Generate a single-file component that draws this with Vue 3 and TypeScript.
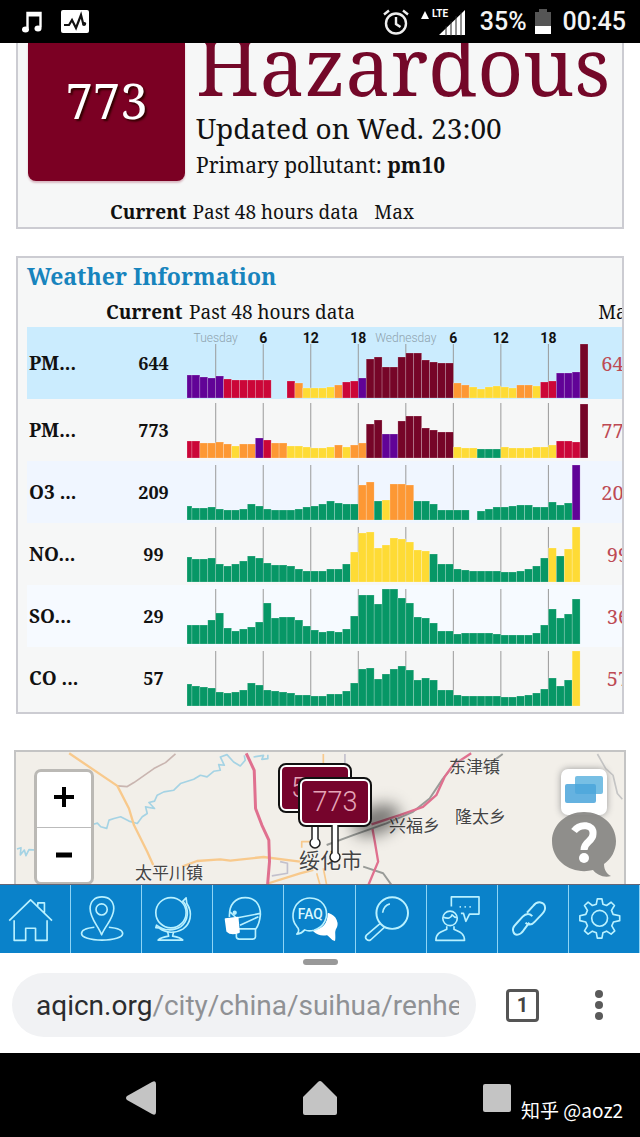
<script setup lang="ts">
type Bar = { x: number; y: number; w: number; h: number; fill: string }
type Series = { name: string; current: number; max: number; data: string }

const BASE = 59
const colors: Record<string, string> = {
  G: '#079766',
  Y: '#fedb35',
  O: '#fd9834',
  R: '#cb0638',
  P: '#610397',
  M: '#760528',
}

const series: Series[] = [
  {
    name: 'PM...', current: 644, max: 644,
    data: 'P23 P23 P21 P20 P22 R19 R18 R18 R18 R18 R18 - - R17 O15 Y10 Y10 Y10 Y11 O13 R16 R17 P20 M39 M41 M31 M31 M41 M45 M45 M38 M36 M35 M35 O15 O13 Y11 Y9 Y11 Y12 Y11 Y10 O13 O13 Y12 R16 R17 P25 P25 P26 M54',
  },
  {
    name: 'PM...', current: 773, max: 773,
    data: 'R17 R17 O15 O15 O16 O14 Y12 O14 O14 P20 R18 O15 O15 Y12 Y12 Y11 Y10 Y10 Y11 O13 Y11 O13 O15 M34 M38 P24 P24 M37 M42 M42 M30 M28 M26 M26 Y11 Y10 Y10 G9 G9 G9 Y11 Y10 Y10 Y10 Y11 Y11 Y13 R17 R17 R16 M54',
  },
  {
    name: 'O3 ...', current: 209, max: 209,
    data: 'G14 G12 G12 G13 G11 G10 G10 G11 G16 G14 G11 G10 G10 G10 G11 G13 G14 G16 G19 G17 G16 G16 O35 O38 G19 Y20 O36 O36 O35 G19 G19 G16 G10 G10 G10 G10 - G9 G11 G13 G13 G14 G15 G15 G13 G13 G18 G15 G17 P55',
  },
  {
    name: 'NO...', current: 99, max: 99,
    data: 'G25 G23 G23 G24 G18 G16 G18 G21 G26 G24 G19 G17 G17 G16 G13 G11 G11 G11 G13 G13 G18 Y30 Y49 Y50 Y34 Y37 Y44 Y43 Y40 Y32 Y31 G28 G18 G18 G13 G12 G11 G11 G11 G11 G10 G10 G11 G13 G16 G24 Y34 G26 Y33 Y55',
  },
  {
    name: 'SO...', current: 29, max: 36,
    data: 'G19 G19 G19 G24 G31 G16 G13 G15 G17 G22 G41 G26 G27 G27 G24 G18 G14 G12 G13 G12 G15 G28 G49 G49 G40 G55 G55 G46 G41 G27 G26 G21 G13 G13 G10 G11 G11 G11 G11 G10 G9 G9 G9 G9 G11 G19 G35 G26 G30 G45',
  },
  {
    name: 'CO ...', current: 57, max: 57,
    data: 'G22 G20 G19 G18 G14 G13 G14 G16 G23 G21 G16 G15 G14 G13 G11 G11 G10 G10 G12 G12 G15 G23 G37 G38 G27 G32 G37 G40 G36 G26 G28 G26 G16 G16 G11 G10 G10 G10 G10 G10 G9 G9 G10 G11 G13 G17 G28 G20 G26 Y55',
  },
]

function bars(data: string, base: number): Bar[] {
  const out: Bar[] = []
  data.split(' ').forEach((item, i) => {
    if (item === '-') return
    const h = Number(item.slice(1))
    const start = i === 0 ? 0 : 5 + (i - 1) * 8
    out.push({ x: start, y: base - h, w: i === 0 ? 5 : 8, h, fill: colors[item[0]] })
  })
  return out
}

const rows = series.map((s, i) => {
  const height = i === 0 ? 72 : 62
  const base = i === 0 ? 71 : BASE
  return { ...s, height, base, top: i === 0 ? 17 : 4, bars: bars(s.data, base) }
})

const ticks = [29, 77, 125, 173, 221, 269, 317, 365]
const tickLabels = ['Tuesday', '6', '12', '18', 'Wednesday', '6', '12', '18']

const places = [
  { name: '东津镇', cls: 'dongjin' },
  { name: '兴福乡', cls: 'xingfu' },
  { name: '隆太乡', cls: 'longtai' },
  { name: '太平川镇', cls: 'taiping' },
  { name: '绥化市', cls: 'suihua' },
]

const navItems = [
  { label: 'Home', box: '0 12 213 204' },
  { label: 'Here', box: '213 12 213 204' },
  { label: 'Map', box: '427 12 213 204' },
  { label: 'Mask', box: '640 12 213 204' },
  { label: 'FAQ', box: '853 12 213 204' },
  { label: 'Search', box: '107 12 213 204' },
  { label: 'Contact', box: '320 12 213 204' },
  { label: 'Links', box: '533 12 213 204' },
  { label: 'Settings', box: '747 12 213 204' },
]
</script>

<template>
  <div class="phone">
    <header class="status">
      <svg class="music" viewBox="0 0 20 22" width="20" height="22">
        <path d="M5.500 17V2H18.500V16.500" fill="none" stroke="#fff" stroke-width="2.400" />
        <path d="M5 3.500H19" stroke="#fff" stroke-width="4" />
        <ellipse cx="3.500" cy="18.500" rx="3.500" ry="3" fill="#fff" />
        <ellipse cx="16" cy="17.500" rx="3.500" ry="3" fill="#fff" />
      </svg>
      <svg class="pulse" viewBox="0 0 28 23" width="28" height="23">
        <rect width="28" height="23" rx="2" fill="#fff" />
        <path d="M3 15H8L11 10L15 18L20 5L22 13L25 14" fill="none" stroke="#111" stroke-width="2.200" />
        <circle cx="23" cy="14" r="2" fill="#111" />
      </svg>
      <span class="spacer"></span>
      <svg class="alarm" viewBox="0 0 26 26" width="26" height="26" fill="none" stroke="#eee" stroke-width="2.400">
        <circle cx="13" cy="14.500" r="10" />
        <path d="M13 8V15L17.500 18M1 5.500L6 1.500M25 5.500L20 1.500" />
      </svg>
      <svg class="signal" viewBox="0 0 46 28" width="46" height="28">
        <path d="M1 11L5 3L9 11Z" fill="#fff" />
        <path d="M19 27L45 2V27Z" fill="#fff" />
        <path d="M26 18V28M31 13V28M36 8V28M41 4V28" stroke="#222" stroke-width="1" />
        <text x="12" y="9" class="lte">LTE</text>
      </svg>
      <span class="percent">35%</span>
      <svg class="battery" viewBox="0 0 16 25" width="16" height="25">
        <path d="M4 0H12V3H16V25H0V3H4Z" fill="#555" />
        <path d="M0 17H16V25H0Z" fill="#fff" />
      </svg>
      <span class="clock">00:45</span>
    </header>

    <main class="page">
      <section class="card summary">
        <div class="overview">
          <div class="badge">773</div>
          <div class="state">
            <h1>Hazardous</h1>
            <p class="updated">Updated on Wed. 23:00</p>
            <p class="pollutant">Primary pollutant: <b>pm10</b></p>
          </div>
        </div>
        <table class="legend">
          <thead>
            <tr>
              <th class="strong">Current</th>
              <th>Past 48 hours data</th>
              <th>Max</th>
            </tr>
          </thead>
        </table>
      </section>

      <section class="card weather">
        <h2>Weather Information</h2>
        <table class="data">
          <colgroup>
            <col class="c-name" />
            <col class="c-current" />
            <col class="c-chart" />
            <col class="c-max" />
          </colgroup>
          <thead>
            <tr>
              <th></th>
              <th class="strong">Current</th>
              <th class="past">Past 48 hours data</th>
              <th class="centered">Max</th>
            </tr>
          </thead>
          <tbody>
            <tr v-for="(row, i) in rows" :key="i" :class="'r' + i">
              <th scope="row" class="name">{{ row.name }}</th>
              <td class="current">{{ row.current }}</td>
              <td class="chart">
                <div class="plot">
                  <svg :viewBox="`0 0 405 ${row.height}`" preserveAspectRatio="none">
                    <line v-for="t in ticks" :key="t" :x1="t" :x2="t" :y1="row.top" :y2="row.base" stroke="#999" />
                    <rect
                      v-for="b in row.bars" :key="b.x" :x="b.x" :y="b.y" :width="b.w" :height="b.h"
                      :fill="b.fill" stroke="#fff" stroke-opacity="0.35" stroke-width="0.600"
                    />
                  </svg>
                  <template v-if="i === 0">
                    <span
                      v-for="(label, n) in tickLabels" :key="n" class="tick" :class="{ day: label.length > 2 }"
                      :style="{ left: (ticks[n] / 405) * 100 + '%' }"
                    >{{ label }}</span>
                  </template>
                </div>
              </td>
              <td class="max">{{ row.max }}</td>
            </tr>
          </tbody>
        </table>
      </section>

      <section class="map">
        <svg class="roads" viewBox="45 30 1830 402" preserveAspectRatio="xMidYMin slice" fill="none" stroke-linejoin="round">
          <g stroke="#a5d3e4" stroke-width="5">
            <path d="M48 322L60 318L58 340L70 325L75 342L84 324L105 325M275 248L290 244L300 255L318 260L325 235L340 230L360 225L385 238L410 245L425 225L440 215L435 195L462 200L445 182L462 178L470 160L490 150L520 145L540 125L580 112L600 100L620 105L640 88L660 85L655 68L672 70L660 45L680 38L700 60L720 72L735 55L732 40M760 45L790 40L785 52L803 50V38" />
          </g>
          <g stroke="#c9b5b0" stroke-width="5">
            <path d="M350 132L380 134L400 122L460 80L495 62L525 36" />
            <path d="M1035 36V80M815 403L862 395V365L840 360" stroke="#c3c0cc" />
            <path d="M1795 36L1820 80L1842 100L1855 155L1870 172" stroke="#c5c5c5" />
            <path d="M980 310L1060 280L1160 245L1240 210L1290 170L1330 110L1355 80M1450 80L1510 36M1090 375L1150 395L1175 430" stroke="#999b98" stroke-width="6" />
          </g>
          <g stroke="#f8c98c" stroke-width="7">
            <path d="M205 34L350 132L385 200L400 250L440 330L458 370M545 375L590 358L660 353L690 357L790 346L900 360M805 425L900 395L940 385" />
            <path d="M970 36V90M905 318V300H940M950 395L960 430M970 380L980 430" stroke-width="5" />
          </g>
          <g stroke="#e0708f" stroke-width="9">
            <path d="M738 34L762 85L766 200L785 250L806 295L808 360L802 432" />
            <path d="M1115 248L1200 220L1270 195L1310 160L1335 105L1360 70L1415 34M1118 262L1125 300L1135 360L1105 432" stroke-width="7" />
          </g>
        </svg>

        <span v-for="p in places" :key="p.name" class="place" :class="p.cls">{{ p.name }}</span>
        <span class="pin-shadow"></span>

        <button class="pin back" aria-label="Station 5"><span class="plate">5</span><svg width="14" height="40" viewBox="0 0 14 40"><path d="M4 0V28A5 5 0 1 0 10 28V0" fill="#fff" stroke="#222" stroke-width="1.500" /></svg></button>
        <button class="pin front" aria-label="Station 773"><span class="plate">773</span><svg width="14" height="40" viewBox="0 0 14 40"><path d="M4 0V28A5 5 0 1 0 10 28V0" fill="#fff" stroke="#222" stroke-width="1.500" /></svg></button>

        <div class="zoom">
          <button aria-label="Zoom in"><svg width="20" height="20" viewBox="0 0 20 20"><path d="M10 0V20M0 10H20" stroke="#000" stroke-width="4" /></svg></button>
          <button aria-label="Zoom out"><svg width="20" height="20" viewBox="0 0 20 20"><path d="M2 12H18" stroke="#000" stroke-width="5" /></svg></button>
        </div>

        <button class="layers" aria-label="Layers">
          <svg width="40" height="30" viewBox="0 0 40 30">
            <rect x="11" y="1" width="28" height="18" rx="2" fill="#77bfe4" />
            <rect x="1" y="9" width="31" height="19" rx="2" fill="#4aa5da" fill-opacity="0.850" />
          </svg>
        </button>
        <button class="help" aria-label="Help">
          <svg width="66" height="68" viewBox="0 0 66 68">
            <path d="M33 1C51 1 65 14 65 30C65 40 60 48 53 53C53 59 56 63 60 65C53 67 46 64 42 59C23 64 1 52 1 30C1 14 15 1 33 1Z" fill="#888683" fill-opacity="0.930" />
            <path d="M23 20C29 12 43 13 42 23C42 31 33 30 33 39" fill="none" stroke="#fff" stroke-width="7" />
            <circle cx="33" cy="47" r="5" fill="#fff" />
          </svg>
        </button>
      </section>
    </main>

    <nav class="sitebar">
      <a v-for="(item, i) in navItems" :key="item.label" href="#" :aria-label="item.label">
        <svg :viewBox="item.box" fill="none" stroke="#b9f1ff" stroke-width="5" stroke-linejoin="round">
          <template v-if="i === 0">
            <path d="M28 119L93 56L158 119M43 118V179H78V142H108V179H143V118M115 74V65H135V94" />
          </template>
          <template v-else-if="i === 1">
            <path d="M306 162C296 135 271 113 271 82C271 60 286 47 307 47C328 47 343 60 343 82C343 113 316 135 306 162Z" />
            <circle cx="306" cy="85" r="17" />
            <path d="M284 139C262 141 245 148 245 158C245 170 272 178 307 178C342 178 370 170 370 158C370 148 352 141 328 139" />
          </template>
          <template v-else-if="i === 2">
            <circle cx="515" cy="95" r="46" />
            <path d="M552 60C572 84 568 120 545 137C522 152 492 149 473 134M549 62L561 50L563 66C584 98 572 130 552 144C530 158 500 158 478 141L469 140L472 131" />
            <path d="M505 153L508 166C496 168 482 172 476 178H551C546 172 532 168 520 166L523 153" />
          </template>
          <template v-else-if="i === 3">
            <path d="M690 108C688 70 708 49 738 49C768 49 784 70 784 100C782 125 776 137 769 146V168Q768 175 760 175H720Q711 175 711 168V158M690 91L711 111L784 97M778 107L722 133M719 144H769" />
            <circle cx="706" cy="95" r="4" fill="#b9f1ff" />
            <path d="M678 114L715 110L719 154C703 160 690 158 683 151Z" fill="#fff" stroke="#fff" />
          </template>
          <template v-else-if="i === 4">
            <path d="M988 98C1010 105 1020 128 1008 145C1004 153 1008 168 1006 178C998 176 992 163 984 160C968 164 954 159 944 150C969 146 988 130 988 98Z" fill="#fff" stroke="#fff" />
            <path d="M892 160C900 152 898 143 892 137C873 115 878 79 900 61C927 41 966 50 979 80C989 108 975 139 944 148C932 151 922 150 916 147C910 154 901 159 892 160Z" />
            <text x="895" y="114" class="faq">FAQ</text>
          </template>
          <template v-else-if="i === 5">
            <circle cx="217" cy="96" r="48" stroke-width="6" />
            <path d="M188 95C190 80 198 71 210 68M180 128L138 164C132 173 143 183 152 177L194 139" />
          </template>
          <template v-else-if="i === 6">
            <path d="M394 76V47H478V99H449L438 121L431 97H423" />
            <circle cx="390" cy="112" r="22" />
            <path d="M369 108C383 115 394 111 396 101C402 108 407 110 411 109M380 136V145C370 151 347 153 347 179H434C434 153 411 151 402 145V136" />
            <path d="M419 77H455" stroke-dasharray="4 11" />
          </template>
          <template v-else-if="i === 7">
            <path d="M621 95L640 74C653 57 675 62 676 79C677 87 673 93 666 100L645 122C635 134 622 133 617 125M628 125L611 148C600 164 585 166 580 154C576 146 579 138 587 130L608 107C618 96 631 96 637 106" stroke-width="6" />
          </template>
          <template v-else>
            <circle cx="840" cy="112" r="24" />
            <path d="M833 53H847L850 69L861 73L875 63L885 73L876 88L881 100L901 104V119L882 123L877 135L886 150L875 160L861 151L850 156L847 172H833L830 156L818 151L805 160L794 150L803 135L798 123L780 119V104L798 100L803 88L794 73L805 63L818 73L830 69Z" />
          </template>
        </svg>
      </a>
    </nav>

    <footer class="browser">
      <span class="handle"></span>
      <div class="address-row">
        <button class="address"><span class="url"><span class="host">aqicn.org</span>/city/china/suihua/renhe</span></button>
        <button class="tabs" aria-label="Open tabs">1</button>
        <button class="more" aria-label="More"><i></i><i></i><i></i></button>
      </div>
    </footer>

    <div class="system">
      <button aria-label="Back"><svg width="34" height="36" viewBox="0 0 34 36"><path d="M3 16Q1 18 3 20L28 34Q32 36 32 32V4Q32 0 28 2Z" fill="#c4c4c4" /></svg></button>
      <button aria-label="Home"><svg width="36" height="38" viewBox="0 0 36 38"><path d="M16 3Q18 1 20 3L35 18V34Q35 36 33 36H3Q1 36 1 34V18Z" fill="#c4c4c4" /></svg></button>
      <button aria-label="Recent"><svg width="30" height="30" viewBox="0 0 30 30"><rect x="1" y="1" width="28" height="28" rx="2" fill="#c4c4c4" /></svg></button>
      <span class="credit">知乎 @aoz2</span>
    </div>
  </div>
</template>

<style>
body {
  background: #fff;
}
</style>

<style scoped>
.phone {
  display: flex;
  flex-direction: column;
  min-height: 100vh;
  overflow: hidden;
  background: #fff;
  color: #111;
  font-family: "Noto Serif", "DejaVu Serif Condensed", "Liberation Serif", serif;
}
button {
  padding: 0;
  border: 0;
  background: none;
  font: inherit;
  color: inherit;
}
h1, h2, p {
  margin: 0;
  font-weight: 400;
}
.status {
  position: relative;
  z-index: 2;
  display: flex;
  align-items: center;
  height: 43px;
  padding: 0 14px 0 22px;
  background: #000;
  color: #f4f4f4;
  font-family: Roboto, sans-serif;
  font-size: 25px;
  font-weight: 500;
}
.pulse { margin-left: 19px; }
.spacer { flex: 1; }
.signal { margin-left: 11px; }
.lte {
  fill: #fff;
  font-size: 10px;
  font-weight: 700;
}
.percent { margin-left: 14px; }
.battery { margin: 0 12px 0 8px; }

.page {
  display: flex;
  flex-direction: column;
}
.card {
  box-sizing: border-box;
  margin: 0 16px;
  border: 2px solid #ccccd2;
  background: #f6f7f7;
  overflow: hidden;
}
.summary {
  height: 186px;
  border-top: 0;
}
.overview {
  display: flex;
  gap: 11px;
  height: 139px;
  padding-left: 10px;
}
.badge {
  flex: none;
  width: 157px;
  height: 138px;
  border-radius: 0 0 8px 8px;
  background: #7b0023;
  box-shadow: 0 2px 2px #d9b9c2;
  color: #fff;
  font-size: 49px;
  line-height: 114px;
  text-align: center;
  text-shadow: 2px 2px 2px #300;
}
.state { white-space: nowrap; }
.state h1 {
  height: 66px;
  color: #740829;
  font-size: 80px;
  line-height: 44px;
}
.updated {
  font-size: 28px;
  line-height: 38px;
}
.pollutant {
  font-size: 21px;
  line-height: 36px;
}
table {
  border-collapse: collapse;
  font-size: 19px;
}
th {
  padding: 0;
  font-weight: 400;
  text-align: left;
  white-space: nowrap;
}
td { padding: 0; }
.strong { font-weight: 700; }
.legend {
  margin: 18px 0 0 92px;
  line-height: 24px;
}
.legend th { padding-right: 6px; }
.legend th + th { padding-right: 16px; }

.weather {
  height: 458px;
  margin-top: 27px;
  padding-left: 9px;
}
.weather h2 {
  color: #1784bd;
  font-size: 23px;
  font-weight: 700;
  line-height: 36px;
}
.data {
  table-layout: fixed;
  width: 616px;
}
.c-name { width: 79px; }
.c-current { width: 81px; }
.c-chart { width: 406px; }
.c-max { width: 50px; }
.data thead th {
  height: 29px;
  padding-top: 4px;
  line-height: 29px;
}
.data .past { padding-left: 2px; }
.data .centered { text-align: center; }
.data .name {
  padding-left: 2px;
  font-size: 19px;
  font-weight: 700;
}
.data .current {
  padding-left: 14px;
  font-size: 18px;
  font-weight: 700;
  text-align: center;
}
.max {
  color: #bd4a54;
  font-size: 20px;
  text-align: center;
}
.plot {
  position: relative;
  width: 401px;
  height: 62px;
}
.plot svg {
  display: block;
  width: 100%;
  height: 100%;
}
.r0 { background: #cbecfe; }
.r0 .plot { height: 72px; }
.r2 { background: #f0f6ff; }
.r4 { background: #f6faff; }
.tick {
  position: absolute;
  top: 2px;
  transform: translateX(-50%);
  font-family: Roboto, sans-serif;
  font-size: 14px;
  font-weight: 700;
  line-height: 18px;
}
.tick.day {
  color: #8fa3ae;
  font-size: 12px;
  font-weight: 300;
}

.map {
  position: relative;
  box-sizing: border-box;
  height: 134px;
  margin: 36px 14px 0;
  border: 2px solid #c4c4c4;
  border-bottom: 0;
  background: #f2efe9;
  overflow: hidden;
}
.roads {
  display: block;
  width: 100%;
  height: 100%;
}
.place {
  position: absolute;
  color: #444;
  font-family: "Noto Sans CJK SC", sans-serif;
  font-size: 17px;
  line-height: 20px;
  text-shadow: 0 0 2px #fff;
}
.dongjin { left: 433px; top: 4px; }
.xingfu { left: 373px; top: 63px; }
.longtai { left: 439px; top: 54px; }
.taiping { left: 119px; top: 110px; }
.suihua { left: 283px; top: 97px; font-size: 21px; }
.pin-shadow {
  position: absolute;
  left: 335px;
  top: 54px;
  width: 50px;
  height: 28px;
  border-radius: 50%;
  background: rgba(0, 0, 0, 0.5);
  filter: blur(8px);
  transform: rotate(-20deg);
}
.pin {
  position: absolute;
  display: flex;
  flex-direction: column;
  align-items: center;
}
.plate {
  box-sizing: border-box;
  width: 72px;
  height: 48px;
  border: 3px solid #fff;
  border-radius: 7px;
  outline: 2px solid #111;
  outline-offset: -1px;
  background: #76042c;
  color: #e5a6b8;
  font-family: Roboto, sans-serif;
  font-size: 27px;
  font-weight: 300;
  line-height: 43px;
}
.pin svg { margin-top: -1px; }
.back { left: 263px; top: 12px; }
.back .plate {
  padding-left: 9px;
  text-align: left;
}
.front { left: 283px; top: 26px; }
.zoom {
  position: absolute;
  left: 18px;
  top: 17px;
  display: flex;
  flex-direction: column;
  border: 3px solid #bbb9b5;
  border-radius: 7px;
  background: #fff;
}
.zoom button {
  width: 54px;
  height: 55px;
}
.zoom button + button { border-top: 1px solid #bbb; }
.layers {
  position: absolute;
  right: 17px;
  top: 17px;
  width: 46px;
  height: 46px;
  border-radius: 7px;
  background: #fff;
  box-shadow: 0 0 7px #999;
}
.help {
  position: absolute;
  right: 7px;
  top: 59px;
}

.sitebar {
  display: grid;
  grid-template-columns: repeat(9, 1fr);
  box-sizing: border-box;
  height: 69px;
  border-top: 1px solid #667;
  background: #0a82ca;
}
.sitebar a {
  border-right: 1px solid #8fd4f5;
}
.sitebar svg {
  display: block;
  width: 100%;
  height: 68px;
}
.faq {
  fill: #d9f7ff;
  stroke: none;
  font-family: Roboto, sans-serif;
  font-size: 42px;
  font-weight: 500;
}

.browser {
  display: flex;
  flex-direction: column;
  height: 100px;
  background: #fff;
}
.handle {
  align-self: center;
  width: 35px;
  height: 6px;
  margin-top: 6px;
  border-radius: 3px;
  background: #999;
}
.address-row {
  display: flex;
  align-items: center;
  margin-top: 8px;
  padding: 0 37px 0 12px;
  font-family: Roboto, sans-serif;
}
.address {
  flex: 1;
  min-width: 0;
  height: 64px;
  padding: 0 17px 0 24px;
  border-radius: 32px;
  background: #f1f2f4;
  color: #8f9194;
  font-size: 28px;
  text-align: left;
}
.url {
  display: block;
  overflow: hidden;
  white-space: nowrap;
}
.host { color: #2b2c2e; }
.tabs {
  box-sizing: border-box;
  width: 33px;
  height: 33px;
  margin-left: 30px;
  border: 3px solid #555;
  border-radius: 4px;
  color: #444;
  font-size: 20px;
  font-weight: 700;
}
.more {
  display: flex;
  flex-direction: column;
  gap: 3px;
  margin-left: 56px;
}
.more i {
  width: 8px;
  height: 8px;
  border-radius: 50%;
  background: #5a5a5a;
}
.system {
  position: relative;
  display: flex;
  flex: 1;
  align-items: center;
  justify-content: space-around;
  min-height: 84px;
  padding: 0 56px 0 52px;
  background: #000;
}
.system button {
  display: flex;
  margin-top: 5px;
}
.credit {
  position: absolute;
  right: 17px;
  bottom: 14px;
  color: #fff;
  font-family: "Noto Sans CJK SC", sans-serif;
  font-size: 19px;
  line-height: 26px;
}
</style>
